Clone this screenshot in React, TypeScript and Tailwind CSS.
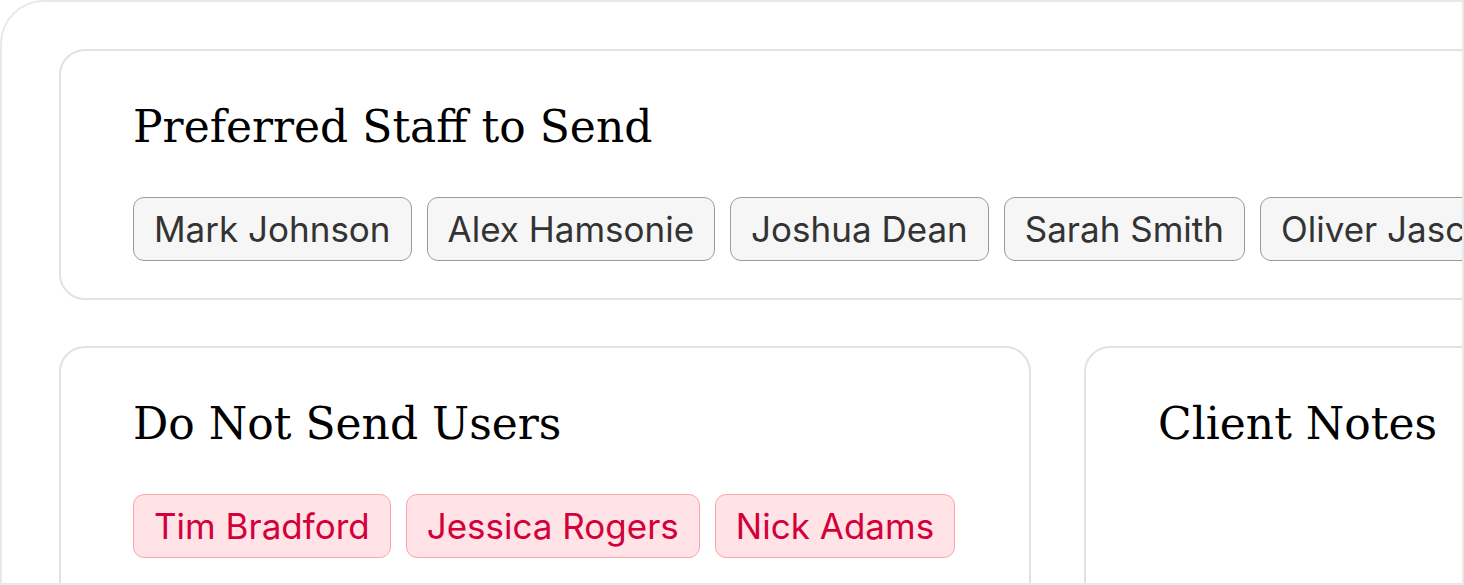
import type { ReactNode } from "react";

const PREFERRED = ["Mark Johnson", "Alex Hamsonie", "Joshua Dean", "Sarah Smith", "Oliver Jaschke"];
const BLOCKED = ["Tim Bradford", "Jessica Rogers", "Nick Adams"];

const SERIF = "font-['DejaVu_Serif',serif]";

function Card({ title, children, className }: { title: string; children?: ReactNode; className?: string }) {
	return (
		<div className={`shrink-0 rounded-[26px] border-2 border-[#e2e2e2] bg-white pl-[72px] pt-[46px] ${className ?? ""}`}>
			<h2 className={`${SERIF} m-0 text-[44px] leading-[60px] text-black`}>{title}</h2>
			{children}
		</div>
	);
}

function Chip({ name, danger }: { name: string; danger?: boolean }) {
	return (
		<span
			className={
				danger
					? "inline-flex h-[64px] shrink-0 items-center rounded-[11px] border-[1.5px] border-[#fda4ab] bg-[#ffe3e6] px-[20px] text-[35px] text-[#d30039]"
					: "inline-flex h-[64px] shrink-0 items-center rounded-[11px] border-[1.5px] border-[#9b9b9b] bg-[#f6f6f6] px-[20px] text-[35px] text-[#333333]"
			}
		>
			{name}
		</span>
	);
}

export default function App() {
	return (
		<div className="h-[585px] w-[1464px] overflow-hidden bg-white font-['Inter',sans-serif]">
			<div className="h-full w-full overflow-hidden rounded-tl-[44px] border-2 border-[#e8e8e8] bg-white pl-[57px] pt-[47px]">
				<div className="flex w-[2000px] flex-col gap-[46px]">
					<Card title="Preferred Staff to Send" className="h-[251px] w-[1900px]">
						<div className="mt-[40px] flex gap-[15px]">
							{PREFERRED.map((n) => (
								<Chip key={n} name={n} />
							))}
						</div>
					</Card>
					<div className="flex gap-[53px]">
						<Card title="Do Not Send Users" className="h-[260px] w-[972px]">
							<div className="mt-[40px] flex gap-[15px]">
								{BLOCKED.map((n) => (
									<Chip key={n} name={n} danger />
								))}
							</div>
						</Card>
						<Card title="Client Notes" className="h-[260px] w-[900px]" />
					</div>
				</div>
			</div>
		</div>
	);
}
